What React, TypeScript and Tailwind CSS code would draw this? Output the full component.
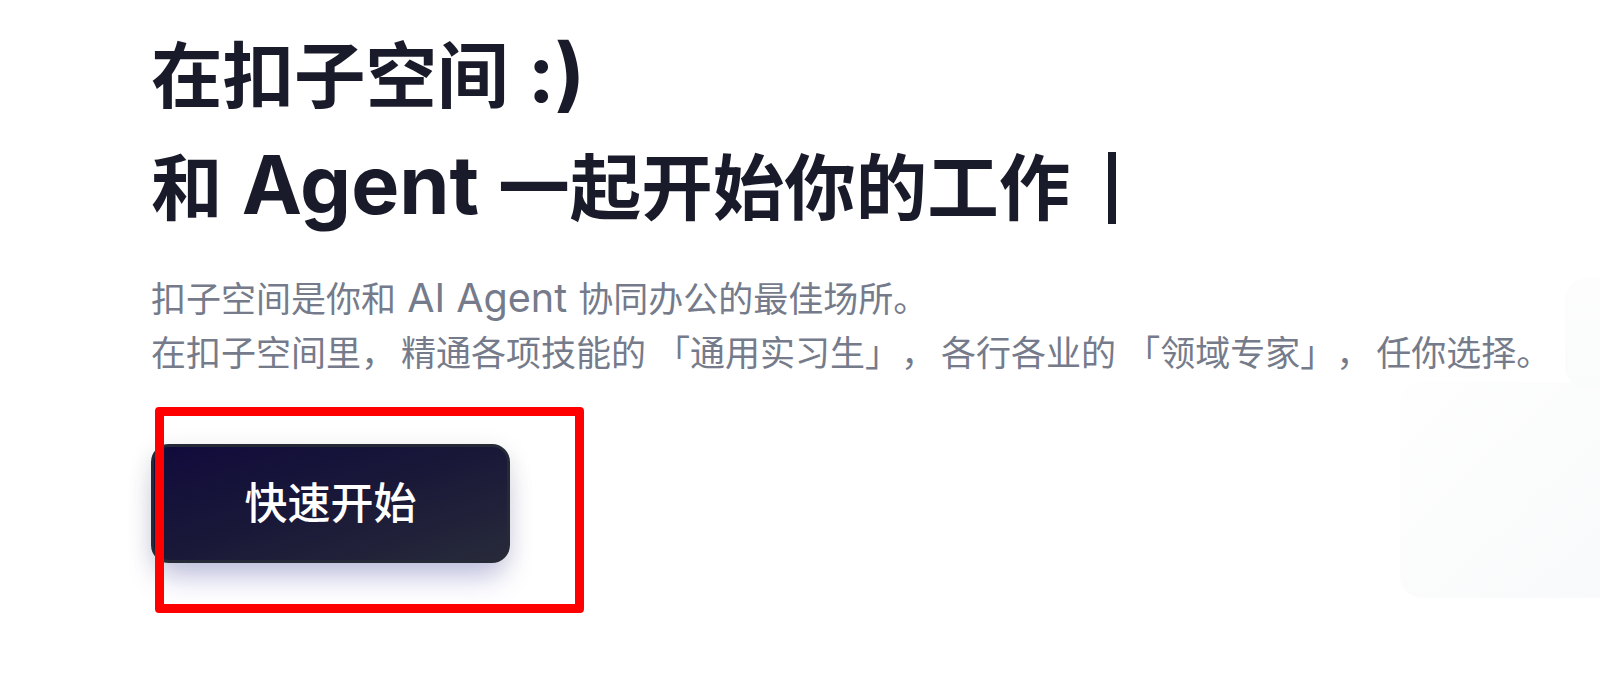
const Latin = ({ children }: { children: string }) => (
  <span className="text-[1.13em] leading-none">{children}</span>
);

export default function App() {
  return (
    <div className="relative h-[688px] w-full overflow-hidden bg-white font-[Inter,'Noto_Sans_CJK_SC',sans-serif] [text-spacing-trim:space-all]">
      {/* faint illustration on the right */}
      <div className="absolute left-[1400px] top-[382px] h-[216px] w-[240px] rounded-[22px] bg-gradient-to-br from-[#fefefe] to-[#f8f9fa]" />
      <div className="absolute left-[1565px] top-[278px] h-[110px] w-[80px] rounded-[22px] bg-gradient-to-b from-[#fdfdfe] to-[#fafbfb]" />

      <div className="pl-[151px] pt-[20px]">
        <h1 className="text-[71.5px] font-bold leading-[112px] text-[#191b2a]">
          <div>
            在扣子空间<Latin> :)</Latin>
          </div>
          <div className="flex items-center">
            <span>
              和<Latin> Agent </Latin>一起开始你的工作
            </span>
            <span className="ml-[38px] inline-block h-[72px] w-[8px] bg-[#191b2a]" />
          </div>
        </h1>

        <div className="mt-[28px] text-[35px] leading-[54px] text-[#757b8a]">
          <p>
            扣子空间是你和<Latin> AI Agent </Latin>协同办公的最佳场所。
          </p>
          <p>
            在扣子空间里<span className="mr-[5px]">，</span>精通各项技能的
            <span className="ml-[9px]">「</span>通用实习生<span className="mr-[1px]">」</span>
            <span className="mr-[5px]">，</span>各行各业的<span className="ml-[9px]">「</span>领域专家
            <span className="mr-[1px]">」</span>
            <span className="mr-[5px]">，</span>任你选择。
          </p>
        </div>

        <button className="mt-[64px] flex h-[119px] w-[359px] items-center justify-center rounded-[18px] border-[3px] border-[#262936] bg-gradient-to-br from-[#110a3c] via-[#1a1838] to-[#272a3a] text-[43px] font-medium text-white shadow-[0_22px_30px_-8px_rgba(80,80,190,0.28),0_6px_24px_rgba(0,0,0,0.12)]">
          快速开始
        </button>
      </div>

      {/* red annotation box */}
      <div className="absolute left-[155px] top-[407px] h-[206px] w-[429px] rounded-[4px] border-[9px] border-[#ff0000]" />
    </div>
  );
}
